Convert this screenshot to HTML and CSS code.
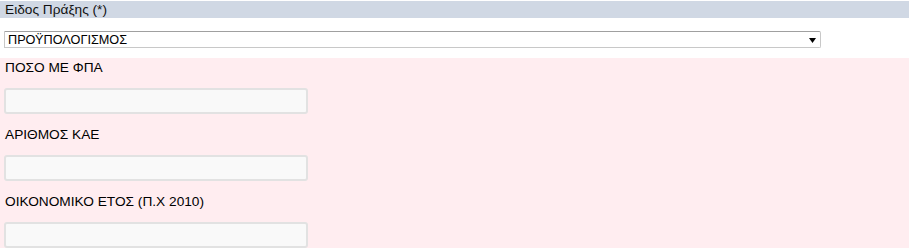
FILE: index.html
```html
<!DOCTYPE html>
<html lang="el">
<head>
<meta charset="utf-8">
<title>Είδος Πράξης</title>
<link rel="stylesheet" href="styles.css">
</head>
<body>
<div class="form">
  <div class="section-title">Ειδος Πράξης (*)</div>
  <div class="select-row">
    <div class="select-wrap">
      <select class="select">
        <option>ΠΡΟΫΠΟΛΟΓΙΣΜΟΣ</option>
      </select>
      <svg class="arrow" width="7" height="5" viewBox="0 0 7 5"><path d="M0 0H7L3.5 5Z" fill="#000"/></svg>
    </div>
  </div>
  <div class="fields">
    <div class="field">
      <label class="label">ΠΟΣΟ ΜΕ ΦΠΑ</label>
      <input class="input" type="text">
    </div>
    <div class="field">
      <label class="label">ΑΡΙΘΜΟΣ ΚΑΕ</label>
      <input class="input" type="text">
    </div>
    <div class="field">
      <label class="label">ΟΙΚΟΝΟΜΙΚΟ ΕΤΟΣ (Π.Χ 2010)</label>
      <input class="input" type="text">
    </div>
  </div>
</div>
</body>
</html>
```
FILE: styles.css
```css
html, body {
  margin: 0;
  padding: 0;
  background: #ffffff;
}
body {
  font-family: "Liberation Sans", Arial, sans-serif;
  font-size: 13.7px;
  color: #000;
}
.form {
  margin-right: 2px;
  padding-top: 1px;
}
.section-title {
  background: #d0d8e4;
  height: 17px;
  line-height: 17px;
  padding-left: 5px;
  color: #111;
}
.select-row {
  padding: 13px 0 10px 4px;
}
.select-wrap {
  position: relative;
  width: 817px;
  height: 17px;
}
.select {
  -webkit-appearance: none;
  appearance: none;
  display: block;
  width: 817px;
  height: 17px;
  margin: 0;
  padding: 1px 0 0 3px;
  box-sizing: border-box;
  border: 1px solid #c8c8c8;
  border-top-color: #a0a0a0;
  border-radius: 0 2px 2px 0;
  background: #fff;
  font-family: "Liberation Sans", Arial, sans-serif;
  font-size: 12.7px;
  color: #000;
  line-height: 15px;
  outline: none;
}
.arrow {
  position: absolute;
  right: 5px;
  top: 7px;
  pointer-events: none;
}
.fields {
  background: #ffedf0;
  padding: 2px 0 0 0;
}
.field {
  display: flex;
  flex-direction: column;
  align-items: flex-start;
  padding-bottom: 13px;
}
.label {
  display: block;
  padding-left: 5px;
  line-height: 15px;
  height: 15px;
  margin-bottom: 13px;
}
.input {
  display: block;
  margin: 0 0 0 4px;
  width: 304px;
  height: 26px;
  box-sizing: border-box;
  border: 2px solid #e2e2e2;
  border-radius: 3px;
  background: #f9f9f9;
  padding: 0 4px;
  font-family: "Liberation Sans", Arial, sans-serif;
  font-size: 13px;
  outline: none;
}
```
